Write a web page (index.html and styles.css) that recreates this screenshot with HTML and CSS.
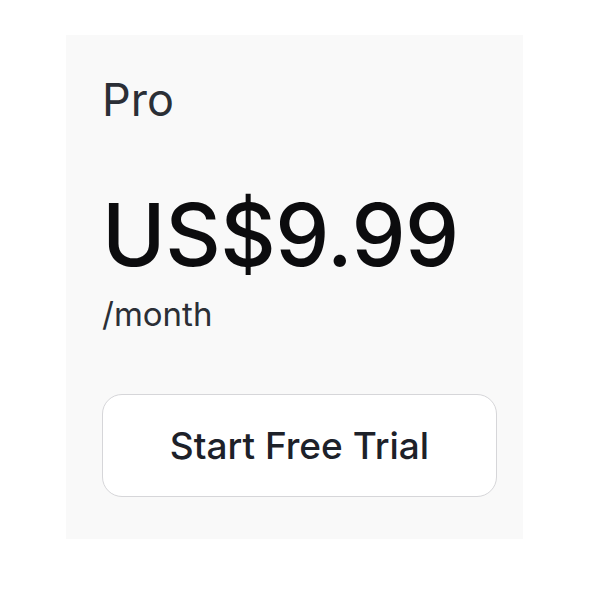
FILE: index.html
```html
<!DOCTYPE html>
<html>
<head>
<meta charset="utf-8">
<link rel="stylesheet" href="styles.css">
</head>
<body>
<div class="card">
  <div class="plan">Pro</div>
  <div class="price">US$9.99</div>
  <div class="period">/month</div>
  <button class="cta">Start Free Trial</button>
</div>
</body>
</html>
```
FILE: styles.css
```css
html, body {
  margin: 0;
  padding: 0;
  background: #ffffff;
}
body {
  font-family: Inter, "Noto Sans", sans-serif;
  padding: 35px 0 0 66px;
}
.card {
  width: 457px;
  height: 504px;
  box-sizing: border-box;
  background: #f9f9f9;
  padding: 72px 26px 0 36px;
  display: flex;
  flex-direction: column;
  align-items: stretch;
}
.plan {
  font-size: 45px;
  line-height: 56px;
  color: #2b2f36;
  margin-top: -35px;
}
.price {
  font-size: 86px;
  line-height: 100px;
  color: #0c0c0e;
  font-weight: 500;
  margin-top: 57px;
  letter-spacing: -0.5px;
}
.period {
  font-size: 33px;
  line-height: 40px;
  color: #2b2f36;
  margin-top: 9px;
}
.cta {
  margin-top: 60px;
  height: 103px;
  border: 1.5px solid #d6d6d9;
  border-radius: 20px;
  background: #ffffff;
  font-family: Inter, "Noto Sans", sans-serif;
  font-size: 37px;
  color: #1d2129;
  font-weight: 500;
  padding: 0;
}
```
